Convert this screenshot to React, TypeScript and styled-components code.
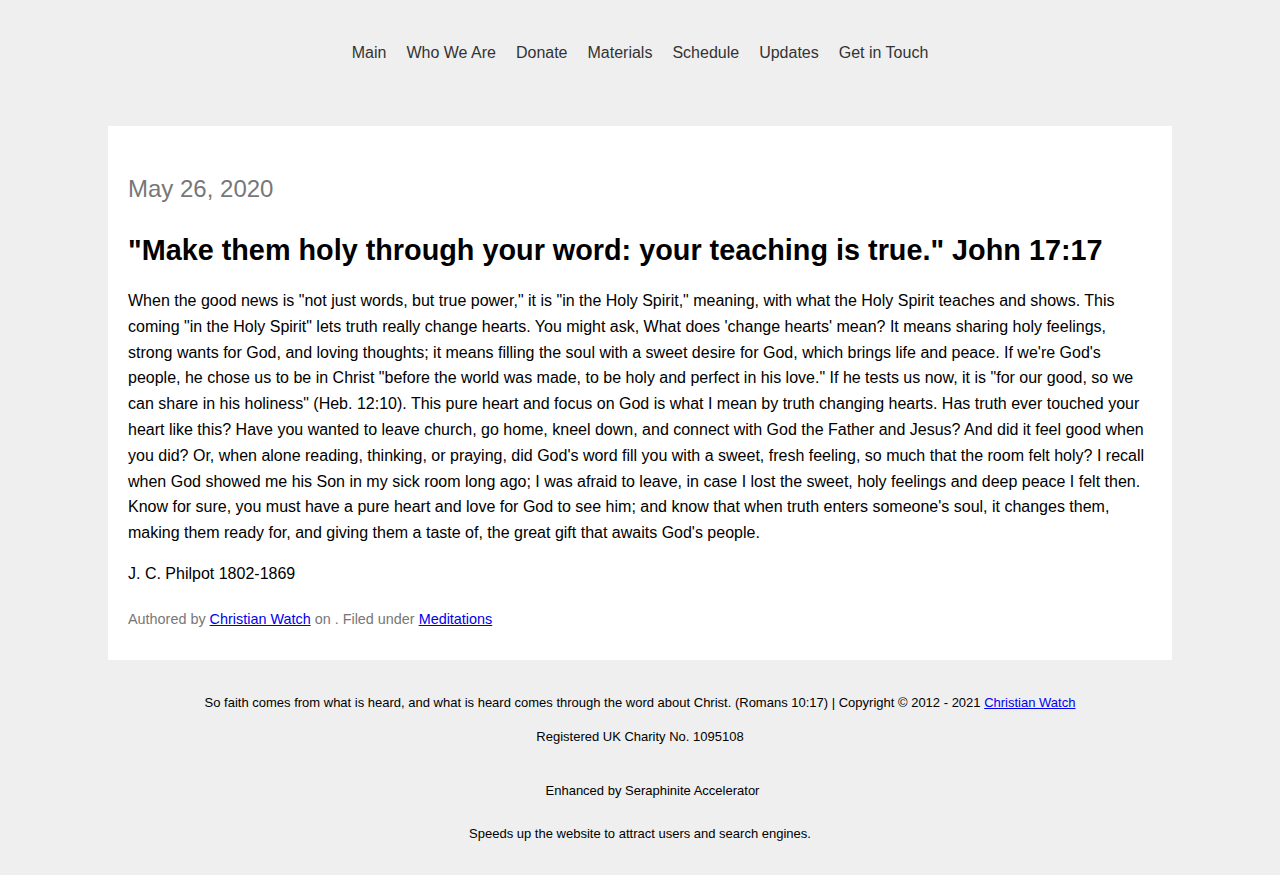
import React from "react";
import styled, { createGlobalStyle } from "styled-components";

const Global = createGlobalStyle`
  html, body { margin: 0; padding: 0; background: #efefef; }
  body { font-family: "Liberation Sans", Arial, sans-serif; color: #000; }
`;

const Page = styled.div`
  width: 1064px;
  margin: 0 auto;
`;

const Nav = styled.nav`
  display: flex;
  justify-content: center;
  gap: 20px;
  padding: 43px 0 0;
  height: 84px;
  box-sizing: border-box;
`;

const NavLink = styled.a`
  font-size: 16px;
  line-height: 20px;
  color: #333;
  text-decoration: none;
`;

const Card = styled.article`
  background: #fff;
  margin-top: 42px;
  padding: 49px 20px 32px;
`;

const DateLine = styled.div`
  font-size: 24px;
  line-height: 28px;
  color: #777;
`;

const Title = styled.h1`
  font-size: 28.8px;
  line-height: 36px;
  font-weight: bold;
  margin: 29px 0 20px;
`;

const Body = styled.p`
  font-size: 16px;
  line-height: 25.8px;
  margin: 0 0 15px;
`;

const Meta = styled.div`
  font-size: 14.4px;
  line-height: 18px;
  color: #777;
  margin-top: 23px;
`;

const Link = styled.a`
  color: #0000ee;
  text-decoration: underline;
`;

const Footer = styled.footer`
  text-align: center;
  font-size: 13px;
  padding-top: 35px;
`;

const FooterLine = styled.p<{ $gap?: number; $indent?: number }>`
  margin: 0 0 ${(p) => p.$gap ?? 20}px;
  padding-left: ${(p) => p.$indent ?? 0}px;
  line-height: 15px;
`;

export default function App() {
  const nav = ["Main", "Who We Are", "Donate", "Materials", "Schedule", "Updates", "Get in Touch"];
  return (
    <>
      <Global />
      <Page>
        <Nav>
          {nav.map((n) => (
            <NavLink key={n} href="#">{n}</NavLink>
          ))}
        </Nav>
        <Card>
          <DateLine>May 26, 2020</DateLine>
          <Title>"Make them holy through your word: your teaching is true." John 17:17</Title>
          <Body>
            When the good news is "not just words, but true power," it is "in the Holy Spirit," meaning, with what the Holy Spirit teaches and shows. This coming "in the Holy Spirit" lets truth really change hearts. You might ask, What does 'change hearts' mean? It means sharing holy feelings, strong wants for God, and loving thoughts; it means filling the soul with a sweet desire for God, which brings life and peace. If we're God's people, he chose us to be in Christ "before the world was made, to be holy and perfect in his love." If he tests us now, it is "for our good, so we can share in his holiness" (Heb. 12:10). This pure heart and focus on God is what I mean by truth changing hearts. Has truth ever touched your heart like this? Have you wanted to leave church, go home, kneel down, and connect with God the Father and Jesus? And did it feel good when you did? Or, when alone reading, thinking, or praying, did God's word fill you with a sweet, fresh feeling, so much that the room felt holy? I recall when God showed me his Son in my sick room long ago; I was afraid to leave, in case I lost the sweet, holy feelings and deep peace I felt then. Know for sure, you must have a pure heart and love for God to see him; and know that when truth enters someone's soul, it changes them, making them ready for, and giving them a taste of, the great gift that awaits God's people.
          </Body>
          <Body>J. C. Philpot 1802-1869</Body>
          <Meta>
            Authored by <Link href="#">Christian Watch</Link> on . Filed under <Link href="#">Meditations</Link>
          </Meta>
        </Card>
        <Footer>
          <FooterLine $gap={19}>
            So faith comes from what is heard, and what is heard comes through the word about Christ. (Romans 10:17) | Copyright © 2012 - 2021 <Link href="#">Christian Watch</Link>
          </FooterLine>
          <FooterLine $gap={39}>Registered UK Charity No. 1095108</FooterLine>
          <FooterLine $gap={28} $indent={25}>Enhanced by Seraphinite Accelerator</FooterLine>
          <FooterLine $gap={20}>Speeds up the website to attract users and search engines.</FooterLine>
        </Footer>
      </Page>
    </>
  );
}
